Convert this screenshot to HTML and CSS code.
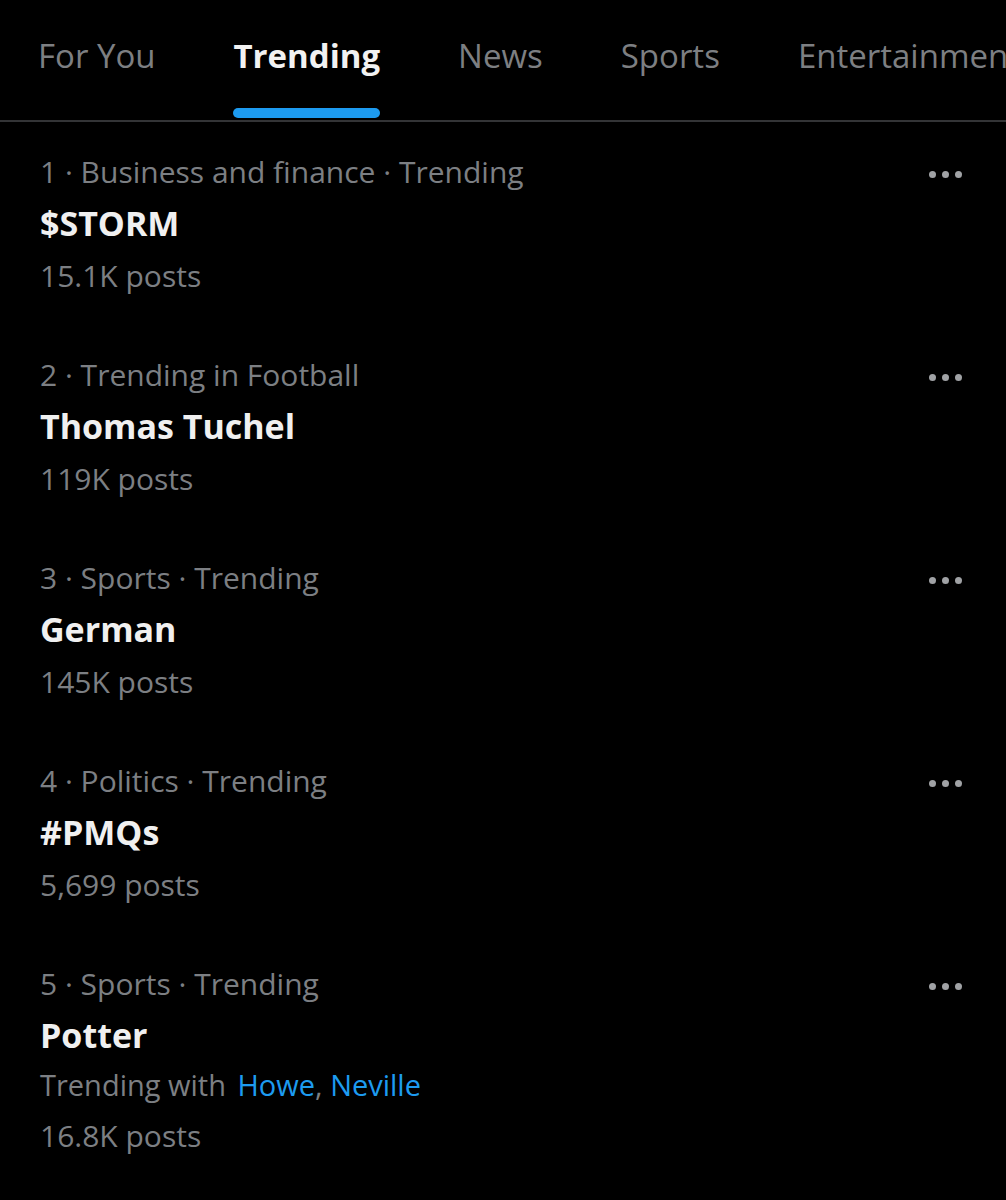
FILE: index.html
```html
<!DOCTYPE html>
<html lang="en">
<head>
    <meta charset="UTF-8">
    <meta name="viewport" content="width=device-width, initial-scale=1.0">
    <title>Explore</title>
    <link rel="stylesheet" href="styles.css">
</head>
<body>

    <!-- Pestañas -->
    <nav class="tabs">
        <div class="tab">For You</div>
        <div class="tab active">Trending</div>
        <div class="tab">News</div>
        <div class="tab">Sports</div>
        <div class="tab">Entertainment</div>
    </nav>

    <!-- Lista de tendencias -->
    <div class="trend-list">

        <div class="trend">
            <div class="info">
                <div class="meta">1 · Business and finance · Trending</div>
                <div class="name">$STORM</div>
                <div class="count">15.1K posts</div>
            </div>
            <div class="more"><span></span><span></span><span></span></div>
        </div>

        <div class="trend">
            <div class="info">
                <div class="meta">2 · Trending in Football</div>
                <div class="name">Thomas Tuchel</div>
                <div class="count">119K posts</div>
            </div>
            <div class="more"><span></span><span></span><span></span></div>
        </div>

        <div class="trend">
            <div class="info">
                <div class="meta">3 · Sports · Trending</div>
                <div class="name">German</div>
                <div class="count">145K posts</div>
            </div>
            <div class="more"><span></span><span></span><span></span></div>
        </div>

        <div class="trend">
            <div class="info">
                <div class="meta">4 · Politics · Trending</div>
                <div class="name">#PMQs</div>
                <div class="count">5,699 posts</div>
            </div>
            <div class="more"><span></span><span></span><span></span></div>
        </div>

        <div class="trend">
            <div class="info">
                <div class="meta">5 · Sports · Trending</div>
                <div class="name">Potter</div>
                <div class="count related">Trending with <span class="links"><a href="#">Howe</a>, <a href="#">Neville</a></span></div>
                <div class="count">16.8K posts</div>
            </div>
            <div class="more"><span></span><span></span><span></span></div>
        </div>

    </div>

</body>
</html>
```

FILE: styles.css
```css
/* Estilos generales */
body {
    font-family: 'Open Sans', 'Liberation Sans', sans-serif;
    background-color: #000;
    margin: 0;
    padding: 0;
    color: #e7e9ea;
    overflow: hidden;
}

/* Pestañas */
.tabs {
    display: flex;
    gap: 78px;
    padding-left: 38px;
    height: 120px;
    border-bottom: 2px solid #333436;
    white-space: nowrap;
    overflow: hidden;
}

.tab {
    position: relative;
    font-size: 33px;
    line-height: 44px;
    color: #7d7f82;
    padding-top: 34px;
}

.tab.active {
    color: #f2f2f2;
    font-weight: 700;
}

.tab.active::after {
    content: '';
    position: absolute;
    left: 0;
    right: 0;
    bottom: 2px;
    height: 10px;
    border-radius: 5px;
    background-color: #1d9bf0;
}

/* Tendencias */
.trend-list {
    padding-top: 25px;
}

.trend {
    display: flex;
    justify-content: space-between;
    padding: 0 40px 47px 40px;
}

.meta, .count {
    font-size: 30px;
    color: #7c7f83;
}

.meta {
    line-height: 50px;
}

.count {
    line-height: 54px;
}

.count.related {
    line-height: 48px;
    font-size: 29px;
}

.count .links {
    margin-left: 4px;
}

.name {
    font-size: 34px;
    line-height: 52px;
    font-weight: 700;
    color: #f0f0f0;
}

.count a {
    color: #1d9bf0;
    text-decoration: none;
}

/* Botón de más opciones */
.more {
    display: flex;
    gap: 6px;
    height: 54px;
    align-items: center;
    margin-right: 4px;
}

.more span {
    width: 7px;
    height: 7px;
    border-radius: 50%;
    background-color: #a0a2a5;
}
```
